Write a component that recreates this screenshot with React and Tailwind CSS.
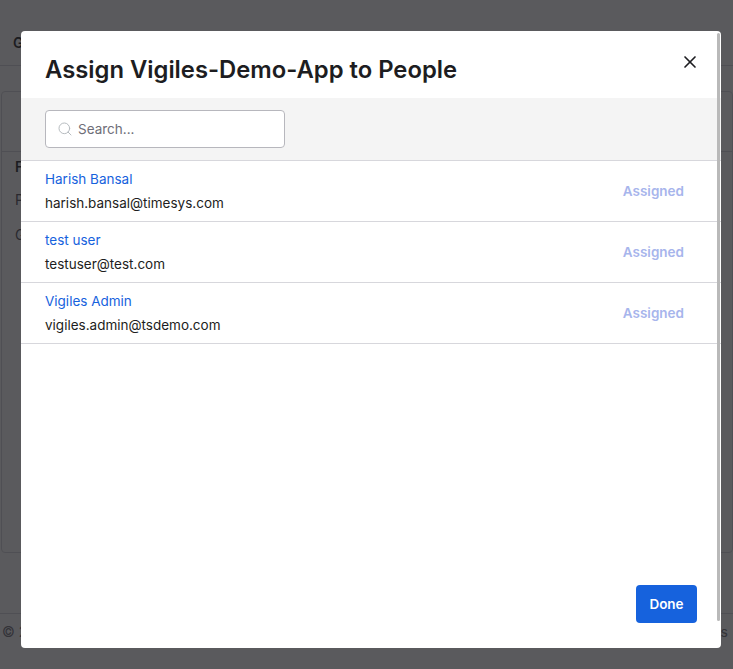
import { X, Search } from 'lucide-react';

const people = [
  { name: 'Harish Bansal', email: 'harish.bansal@timesys.com' },
  { name: 'test user', email: 'testuser@test.com' },
  { name: 'Vigiles Admin', email: 'vigiles.admin@tsdemo.com' },
];

function PageBehind() {
  return (
    <div className="flex h-[669px] flex-col bg-white text-[#1d1d21]">
      <div className="h-[66px] shrink-0 border-b border-[#d7d7dc] pl-[13px] pt-[33px] text-[14px] font-semibold leading-5">G</div>
      <div className="flex-1 pl-[1px] pt-[25px] pb-[60px]">
        <div className="h-full rounded border border-[#d7d7dc]">
          <div className="mt-[59px] border-t border-[#d7d7dc] pl-[13px] pt-[5px] text-[14px] font-semibold leading-5">F</div>
          <div className="mt-[13px] pl-[13px] text-[14px] leading-5 text-[#4a4a55]">P</div>
          <div className="mt-[15px] pl-[13px] text-[14px] leading-5 text-[#4a4a55]">G</div>
        </div>
      </div>
      <div className="flex h-[56px] shrink-0 justify-between border-t border-[#d7d7dc] pl-[2px] pr-[5px] pt-[8px] text-[14px] leading-5 text-[#6e6e78]">
        <span>© 2</span>
        <span>s</span>
      </div>
    </div>
  );
}

export default function App() {
  return (
    <div className="relative h-[669px] overflow-hidden font-['Inter',sans-serif]">
      <PageBehind />
      <div className="absolute inset-0 bg-[#1d1d21]/[0.73]" />

      <div className="absolute left-[21px] top-[31px] flex h-[617px] w-[700px] flex-col overflow-hidden rounded bg-white">
        <div className="relative h-[67px] shrink-0 pl-6 pt-[22px]">
          <h1 className="text-[23.8px] font-semibold leading-[34px] text-[#1d1d21]">Assign Vigiles-Demo-App to People</h1>
          <X className="absolute right-[21px] top-[21px] h-[20px] w-[20px] text-[#1d1d21]" strokeWidth={2} />
        </div>

        <div className="h-[63px] shrink-0 border-b border-[#d7d7dc] bg-[#f4f4f4] pl-6 pt-3">
          <div className="flex h-[38px] w-[240px] items-center gap-[5px] rounded border border-[#b7b7bd] bg-white pl-[11px]">
            <Search className="h-[16px] w-[16px] text-[#b7bcc0]" strokeWidth={1.5} />
            <span className="text-[13.5px] text-[#6e6e78]">Search...</span>
          </div>
        </div>

        {people.map((p) => (
          <div key={p.email} className="flex h-[61px] shrink-0 items-center justify-between border-b border-[#d7d7dc] pl-6 pr-[37px]">
            <div className="text-[13.5px] leading-[24px]">
              <div className="text-[#1662dd]">{p.name}</div>
              <div className="text-[#1d1d21]">{p.email}</div>
            </div>
            <span className="text-[13.5px] font-semibold text-[#a7b5ec]">Assigned</span>
          </div>
        ))}

        <div className="flex flex-1 items-end justify-end pb-[25px] pr-[24px]">
          <button className="h-[38px] w-[61px] rounded bg-[#1662dd] text-[13.5px] font-semibold text-white">Done</button>
        </div>

        <div className="absolute right-[1px] top-[2px] h-[588px] w-[3px] rounded-full bg-[#b9b9b9]" />
      </div>
    </div>
  );
}
